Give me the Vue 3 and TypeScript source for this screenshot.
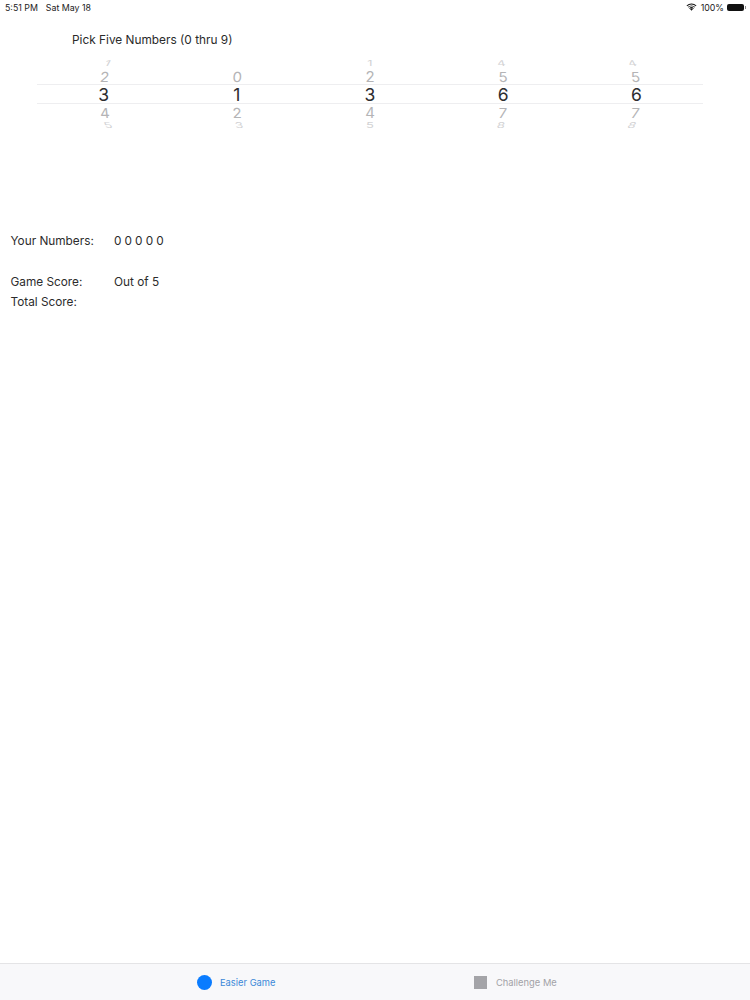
<script setup lang="ts">
const columns: (string | null)[][] = [
  ['1', '2', '3', '4', '5'],
  [null, '0', '1', '2', '3'],
  ['1', '2', '3', '4', '5'],
  ['4', '5', '6', '7', '8'],
  ['4', '5', '6', '7', '8'],
]
const rowClass = ['far', 'near', 'mid', 'near', 'far']
const reach = [2, 0.5, 0, 0.5, 2]
const lean = [-9, -3, 0, 3, 9]
const digitStyle = (col: number, row: number) => ({
  transform: `translateX(${(2 - col) * reach[row]}px) scaleY(var(--squash)) skewX(${(2 - col) * lean[row]}deg)`,
})
</script>

<template>
  <div class="page">
    <header class="status">
      <div class="status-left"><span>5:51 PM</span><span>Sat May 18</span></div>
      <div class="status-right">
        <svg class="wifi" viewBox="0 0 12 9" width="11" height="8" aria-hidden="true">
          <path d="M6 8.6 4.3 6.8a2.4 2.4 0 0 1 3.4 0Z" fill="#111" />
          <path d="M3.4 5.9a3.7 3.7 0 0 1 5.2 0l-.7.8a2.7 2.7 0 0 0-3.8 0Z" fill="#111" />
          <path d="M1.9 4.4a5.8 5.8 0 0 1 8.2 0l-.7.8a4.8 4.8 0 0 0-6.8 0Z" fill="#111" />
          <path d="M.4 2.9a8 8 0 0 1 11.2 0l-.7.8a7 7 0 0 0-9.8 0Z" fill="#111" />
        </svg>
        <span>100%</span>
        <span class="battery"></span>
      </div>
    </header>

    <h1 class="title">Pick Five Numbers (0 thru 9)</h1>

    <section class="picker">
      <div class="band"></div>
      <div v-for="(col, c) in columns" :key="c" class="wheel">
        <div v-for="(value, r) in col" :key="r" class="cell" :class="rowClass[r]">
          <span class="digit" :style="digitStyle(c, r)">{{ value }}</span>
        </div>
      </div>
    </section>

    <section class="scores">
      <div class="row first"><span class="label">Your Numbers:</span><span class="spaced">0 0 0 0 0</span></div>
      <div class="row game"><span class="label">Game Score:</span><span>Out of 5</span></div>
      <div class="row"><span class="label">Total Score:</span><span></span></div>
    </section>

    <nav class="tabs">
      <div class="tab active"><i class="dot"></i><span>Easier Game</span></div>
      <div class="tab muted"><i class="square"></i><span>Challenge Me</span></div>
    </nav>
  </div>
</template>

<style>
html, body { margin: 0; background: #fff; }
</style>

<style scoped>
.page {
  height: 1000px;
  display: flex;
  flex-direction: column;
  font-family: Inter, "Liberation Sans", sans-serif;
  color: #222;
  background: #fff;
  overflow: hidden;
}
.status {
  height: 14px;
  padding: 0 6px 0 5px;
  display: flex;
  justify-content: space-between;
  align-items: center;
  font-size: 8.8px;
  color: #222;
}
.status-left { display: flex; gap: 8px; }
.status-right { display: flex; align-items: center; gap: 3px; }
.wifi { display: block; margin-right: 1px; }
.battery {
  width: 17px;
  height: 7px;
  border-radius: 2px;
  background: #111;
  display: block;
  position: relative;
}
.battery::after {
  content: "";
  position: absolute;
  right: -2px;
  top: 2px;
  width: 1px;
  height: 3px;
  background: #888;
}
.title {
  margin: 18px 0 0 72px;
  font-size: 11.85px;
  line-height: 16px;
  font-weight: 400;
  color: #2a2a2a;
}
.picker {
  position: relative;
  margin: 10px 47px 0 37px;
  display: grid;
  grid-template-columns: repeat(5, 1fr);
}
.band {
  position: absolute;
  left: 0;
  right: 0;
  top: 26px;
  height: 18px;
  border-top: 1px solid #eeeef0;
  border-bottom: 1px solid #eeeef0;
}
.wheel { display: flex; flex-direction: column; }
.cell {
  display: flex;
  justify-content: center;
  align-items: center;
  line-height: 1;
}
.digit { display: block; min-height: 1em; }
.far { height: 10px; font-size: 13px; --squash: 0.62; }
.far .digit { color: #d2d2d4; }
.near { height: 16px; font-size: 15px; --squash: 0.92; }
.near .digit { color: #b4b4b6; }
.mid { height: 20px; font-size: 17.5px; --squash: 1; padding-top: 1px; box-sizing: border-box; }
.mid .digit { color: #2d2d2f; }
.scores {
  margin: 101px 0 0 10.5px;
  display: flex;
  flex-direction: column;
}
.row {
  display: grid;
  grid-template-columns: 103.5px 1fr;
  font-size: 11.8px;
  line-height: 20px;
  color: #2c2c2c;
}
.game { margin-top: 21px; }
.spaced { letter-spacing: -0.1px; }
.tabs {
  margin-top: auto;
  height: 36px;
  border-top: 1px solid #e4e4e6;
  background: #f8f8fa;
  display: grid;
  grid-template-columns: 277px 1fr;
  padding-left: 197px;
  align-items: center;
  font-size: 9.35px;
}
.tab { display: flex; align-items: center; }
.active { color: #3b88d8; gap: 8px; }
.muted { color: #a2a2a6; gap: 9px; }
.dot {
  width: 15px;
  height: 15px;
  border-radius: 50%;
  background: #0a7cff;
  display: block;
}
.square {
  width: 13px;
  height: 13px;
  background: #a4a4a8;
  display: block;
}
</style>
